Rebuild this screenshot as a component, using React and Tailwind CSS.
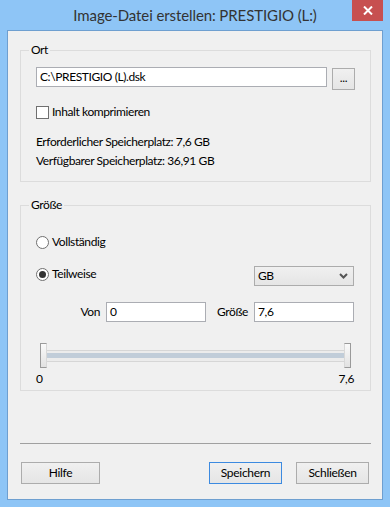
import React from "react";

function Btn({ children, className = "" }) {
  return (
    <button
      className={
        "h-[22px] border bg-gradient-to-b from-[#f0f0f0] to-[#e5e5e5] text-[12px] tracking-[-0.3px] text-black flex items-center justify-center " +
        className
      }
    >
      {children}
    </button>
  );
}

function Input({ value, className = "" }) {
  return (
    <div
      className={
        "h-[20px] border border-[#abadb3] bg-white flex items-center pl-[3px] text-[12px] text-black " +
        className
      }
    >
      {value}
    </div>
  );
}

function Radio({ checked, label }) {
  return (
    <div className="flex items-center h-[16px]">
      <div className="w-[13px] h-[13px] rounded-full border border-[#707070] bg-white flex items-center justify-center">
        {checked && <div className="w-[7px] h-[7px] rounded-full bg-[#333333]" />}
      </div>
      <span className="ml-[3px] text-[12px] text-black">{label}</span>
    </div>
  );
}

export default function App() {
  return (
    <div className="w-[390px] h-[507px] bg-[#8ec5f6] flex flex-col px-[7px] pb-[7px] font-[family-name:Lato,sans-serif] text-[12px] leading-[16px] tracking-[-0.4px] text-black overflow-hidden">
      {/* title bar */}
      <div className="h-[30px] -mx-[7px] grid grid-cols-[1fr_auto_1fr] items-start">
        <div />
        <div className="h-[30px] flex items-center text-[15px] tracking-[-0.1px] text-[#333333]">
          Image-Datei erstellen: PRESTIGIO (L:)
        </div>
        <div className="flex justify-end pr-[7px]">
          <div className="w-[31px] h-[21px] bg-[#c75050] flex items-center justify-center">
            <svg width="10" height="9" viewBox="0 0 10 9">
              <path d="M1 0.5 L9 8.5 M9 0.5 L1 8.5" stroke="white" strokeWidth="2" />
            </svg>
          </div>
        </div>
      </div>

      {/* client */}
      <div className="flex-1 border border-[#6e9fd0] bg-[#f0f0f0] flex flex-col pl-[12px] pr-[11px]">
        {/* Ort */}
        <fieldset className="mt-[11px] border border-[#dcdcdc] p-0 m-0">
          <legend className="ml-[8px] px-[2px] leading-[16px] h-[16px]">Ort</legend>
          <div className="pt-[9px] pl-[15px] pr-[14px] pb-[12px] flex flex-col">
            <div className="flex items-start">
              <Input value="C:\PRESTIGIO (L).dsk" className="w-[291px]" />
              <Btn className="ml-[5px] mt-[1px] w-[23px] h-[19px] border-[#acacac] text-[12px]">
                <span className="-mt-[2px]">...</span>
              </Btn>
            </div>
            <div className="mt-[14px] flex items-center h-[16px]">
              <div className="w-[13px] h-[13px] border border-[#707070] bg-white" />
              <span className="ml-[3px]">Inhalt komprimieren</span>
            </div>
            <div className="mt-[14px]">Erforderlicher Speicherplatz: 7,6 GB</div>
            <div className="mt-[3px]">Verfügbarer Speicherplatz: 36,91 GB</div>
          </div>
        </fieldset>

        {/* Größe */}
        <fieldset className="mt-[15px] border border-[#dcdcdc] p-0 m-0">
          <legend className="ml-[8px] px-[2px] leading-[16px] h-[16px]">Größe</legend>
          <div className="pt-[21px] pl-[15px] pr-[16px] pb-[3px] flex flex-col">
            <Radio label="Vollständig" />
            <div className="mt-[16px] flex items-start justify-between">
              <Radio checked label="Teilweise" />
              <div className="w-[100px] h-[20px] border border-[#acacac] bg-gradient-to-b from-[#f0f0f0] to-[#e5e5e5] flex items-center justify-between pl-[3px] pr-[5px]">
                <span>GB</span>
                <svg width="9" height="6" viewBox="0 0 9 6">
                  <path d="M1 1 L4.5 4.5 L8 1" stroke="#555555" strokeWidth="2" fill="none" />
                </svg>
              </div>
            </div>
            <div className="mt-[16px] grid grid-cols-[70px_100px_48px_100px] items-center">
              <span className="text-right pr-[6px]">Von</span>
              <Input value="0" />
              <span className="text-right pr-[6px]">Größe</span>
              <Input value="7,6" />
            </div>
            {/* slider */}
            <div className="mt-[21px] flex items-start pl-[4px] pr-[3px]">
              <div className="w-[7px] h-[25px] border-l border-y border-r border-[#9a9a9a] border-r-[#d8d8d8] bg-gradient-to-b from-[#fafafa] to-[#e2e2e2]" />
              <div className="flex-1 mt-[7px] h-[12px] border-y border-[#d6d6d6] bg-[#ececec] pt-[2px]">
                <div className="h-[5px] bg-[#c1cdd9]" />
              </div>
              <div className="w-[7px] h-[25px] border-r border-y border-l border-[#9a9a9a] border-l-[#d8d8d8] bg-gradient-to-b from-[#fafafa] to-[#e2e2e2]" />
            </div>
            <div className="mt-[3px] flex justify-between">
              <span>0</span>
              <span>7,6</span>
            </div>
          </div>
        </fieldset>

        <div className="mt-[52px] h-px bg-[#a0a0a0]" />

        <div className="mt-[18px] flex items-center pl-[1px] pr-[2px]">
          <Btn className="w-[79px] border-[#acacac]">Hilfe</Btn>
          <div className="flex-1" />
          <Btn className="w-[73px] border-[#3c8ae0]">Speichern</Btn>
          <Btn className="ml-[14px] w-[73px] border-[#acacac]">Schließen</Btn>
        </div>
      </div>
    </div>
  );
}
